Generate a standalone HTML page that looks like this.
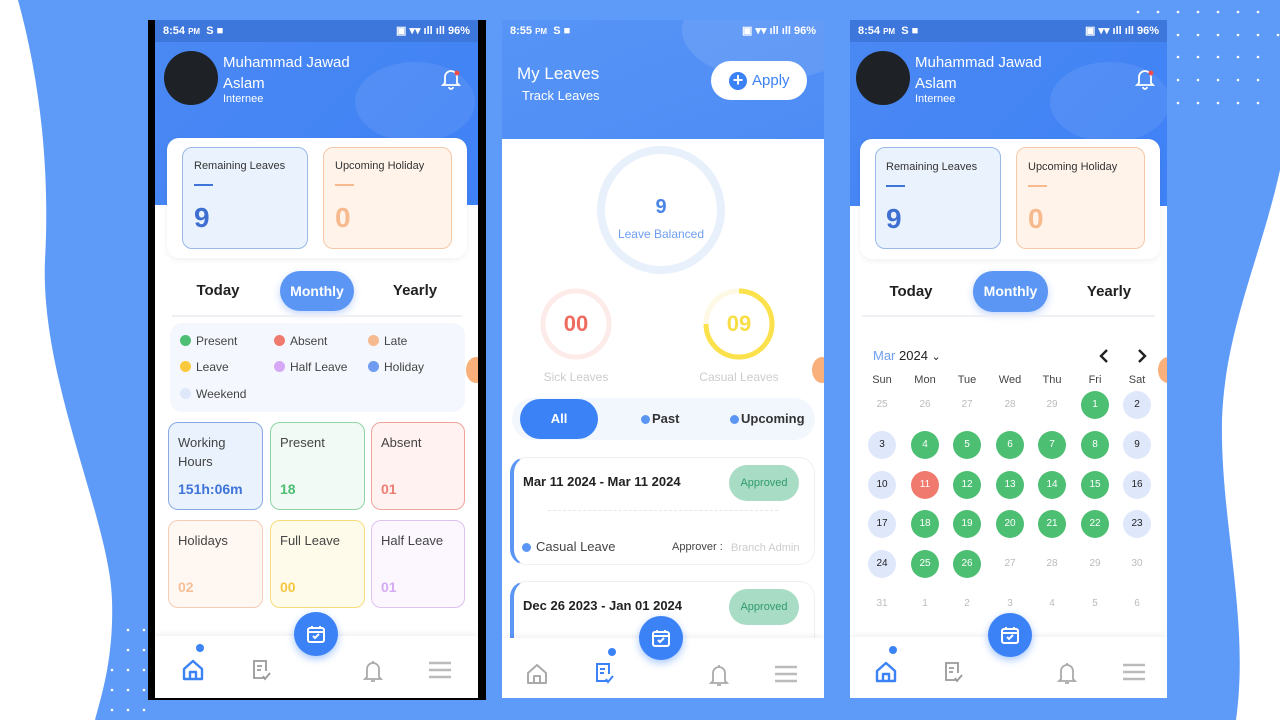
<!DOCTYPE html>
<html><head><meta charset="utf-8">
<style>
*{margin:0;padding:0;box-sizing:border-box}
body{width:1280px;height:720px;overflow:hidden;background:#5e9bf8;font-family:"Liberation Sans",sans-serif;position:relative}
.a{position:absolute}
.ph{position:absolute;top:20px;height:678px;background:#fff;overflow:hidden}
.sb{position:absolute;left:0;top:0;right:0;height:22px;background:#3d77dc;color:#fff;font-size:11px;font-weight:bold;line-height:22px;padding:0 8px}
.sb .r{position:absolute;right:8px;top:0}
.hd{position:absolute;left:0;top:22px;right:0;background:linear-gradient(135deg,#4a88f3,#3f82f6)}
.wh{color:#fff}
.box{position:absolute;border-radius:10px;border:1px solid}
.st{position:absolute;border-radius:10px;border:1.2px solid;font-size:13px;color:#444;padding:10px 9px;line-height:19px}
.st b{position:absolute;left:9px;bottom:10px;font-size:14px;font-weight:bold}
.dot{display:inline-block;width:11px;height:11px;border-radius:50%;vertical-align:-1px;margin-right:5px}
.lg{position:absolute;font-size:12px;color:#444}
.nav{position:absolute;left:0;right:0;bottom:0;height:62px;background:#fff;box-shadow:0 -2px 6px rgba(0,0,0,.06)}
.fab{position:absolute;width:44px;height:44px;border-radius:50%;background:#3b82f6;box-shadow:0 3px 8px rgba(59,130,246,.45)}
.ic{position:absolute}
.c{position:absolute;width:28px;height:28px;border-radius:50%;font-size:10px;text-align:center;line-height:28px;color:#bbb}
.g{background:#4cbf73;color:#fff}.w{background:#dfe7fb;color:#222}.rd{background:#f07a6e;color:#fff}
.tab{position:absolute;font-size:15px;font-weight:bold;color:#222;transform:translateX(-50%)}
.pill{position:absolute;height:40px;border-radius:20px;background:#5b96f5;color:#fff;font-size:14px;font-weight:bold;text-align:center;line-height:40px;box-shadow:0 3px 8px rgba(60,120,240,.3)}
.big{font-size:28px!important;font-weight:bold}
</style></head><body>

<svg class="a" style="left:0;top:0" width="1280" height="720">
<path d="M0 0 L18 0 C40 80 50 170 45 260 C40 380 110 520 112 600 C114 660 100 700 95 720 L0 720 Z" fill="#fff"/>
<path d="M1280 170 C1260 260 1225 330 1222 420 C1220 520 1250 620 1236 720 L1280 720 Z" fill="#fff"/>
<g fill="#fff">
<circle cx="1138" cy="12" r="1.3"/><circle cx="1158" cy="12" r="1.3"/><circle cx="1178" cy="12" r="1.3"/><circle cx="1198" cy="12" r="1.3"/><circle cx="1218" cy="12" r="1.3"/><circle cx="1238" cy="12" r="1.3"/><circle cx="1258" cy="12" r="1.3"/>
<circle cx="1178" cy="35" r="1.3"/><circle cx="1198" cy="35" r="1.3"/><circle cx="1218" cy="35" r="1.3"/><circle cx="1238" cy="35" r="1.3"/><circle cx="1258" cy="35" r="1.3"/><circle cx="1278" cy="35" r="1.3"/>
<circle cx="1178" cy="57" r="1.3"/><circle cx="1198" cy="57" r="1.3"/><circle cx="1218" cy="57" r="1.3"/><circle cx="1238" cy="57" r="1.3"/><circle cx="1258" cy="57" r="1.3"/>
<circle cx="1178" cy="80" r="1.3"/><circle cx="1198" cy="80" r="1.3"/><circle cx="1218" cy="80" r="1.3"/><circle cx="1238" cy="80" r="1.3"/><circle cx="1258" cy="80" r="1.3"/>
<circle cx="1178" cy="103" r="1.3"/><circle cx="1198" cy="103" r="1.3"/><circle cx="1218" cy="103" r="1.3"/><circle cx="1238" cy="103" r="1.3"/><circle cx="1258" cy="103" r="1.3"/>
<circle cx="128" cy="630" r="1.3"/><circle cx="144" cy="630" r="1.3"/><circle cx="128" cy="650" r="1.3"/><circle cx="144" cy="650" r="1.3"/><circle cx="112" cy="670" r="1.3"/><circle cx="128" cy="670" r="1.3"/><circle cx="144" cy="670" r="1.3"/><circle cx="112" cy="690" r="1.3"/><circle cx="128" cy="690" r="1.3"/><circle cx="144" cy="690" r="1.3"/><circle cx="112" cy="710" r="1.3"/><circle cx="128" cy="710" r="1.3"/><circle cx="144" cy="710" r="1.3"/>
</g>
</svg>

<!-- PHONE 1 -->
<div class="a" style="left:148px;top:20px;width:338px;height:680px;background:#000"></div>
<div class="ph" style="left:155px;width:323px">
 <div class="sb">8:54 <span style="font-size:8px">PM</span> &nbsp;S ■ <span class="r">▣ ▾▾ ıll ıll 96%</span></div>
 <div class="hd" style="height:163px"><div class="a" style="left:200px;top:20px;width:120px;height:80px;border-radius:50%;background:rgba(255,255,255,.08)"></div></div>
 <div class="a" style="left:9px;top:31px;width:54px;height:54px;border-radius:50%;background:#1e2226"></div>
 <div class="a wh" style="left:68px;top:32px;font-size:15px;line-height:21px">Muhammad Jawad<br>Aslam</div>
 <div class="a wh" style="left:68px;top:73px;font-size:11px">Internee</div>
 <svg class="ic" style="left:286px;top:48px" width="20" height="22" viewBox="0 0 20 22"><path d="M4 15 V9 a6 6 0 0 1 12 0 V15 L18 17 H2 Z M8 19 a2 2 0 0 0 4 0" fill="none" stroke="#fff" stroke-width="1.8"/><circle cx="16" cy="5" r="2.5" fill="#f04d4d"/></svg>
 <div class="a" style="left:12px;top:118px;width:300px;height:120px;background:#fff;border-radius:12px;box-shadow:0 2px 6px rgba(0,0,0,.06)"></div>
 <div class="box" style="left:27px;top:127px;width:126px;height:102px;background:#eaf2fe;border-color:#9ab8e8"></div>
 <div class="a" style="left:39px;top:140px;font-size:11px;color:#333">Remaining Leaves</div>
 <div class="a" style="left:39px;top:164px;width:19px;height:2px;background:#3f74d8"></div>
 <div class="a big" style="left:39px;top:182px;color:#3f6fd1">9</div>
 <div class="box" style="left:168px;top:127px;width:129px;height:102px;background:#fff3ea;border-color:#f5c9a8"></div>
 <div class="a" style="left:180px;top:140px;font-size:11px;color:#333">Upcoming Holiday</div>
 <div class="a" style="left:180px;top:164px;width:19px;height:2px;background:#f7b98e"></div>
 <div class="a big" style="left:180px;top:182px;color:#f7b98e">0</div>
 <div class="tab" style="left:63px;top:262px">Today</div>
 <div class="pill" style="left:125px;top:251px;width:74px">Monthly</div>
 <div class="tab" style="left:260px;top:262px">Yearly</div>
 <div class="a" style="left:17px;top:295px;width:290px;height:2px;background:#eef0f3"></div>
 <div class="a" style="left:15px;top:303px;width:295px;height:89px;background:#f4f7fd;border-radius:12px"></div>
 <div class="lg" style="left:25px;top:314px"><span class="dot" style="background:#4cbf73"></span>Present</div>
 <div class="lg" style="left:119px;top:314px"><span class="dot" style="background:#f07a6e"></span>Absent</div>
 <div class="lg" style="left:213px;top:314px"><span class="dot" style="background:#f7b98e"></span>Late</div>
 <div class="lg" style="left:25px;top:340px"><span class="dot" style="background:#fbc93d"></span>Leave</div>
 <div class="lg" style="left:119px;top:340px"><span class="dot" style="background:#d7a8f5"></span>Half Leave</div>
 <div class="lg" style="left:213px;top:340px"><span class="dot" style="background:#6f9cf0"></span>Holiday</div>
 <div class="lg" style="left:25px;top:367px"><span class="dot" style="background:#dfe7fb"></span>Weekend</div>
 <div class="a" style="left:311px;top:337px;width:20px;height:26px;border-radius:50%;background:#f9b07a"></div>
 <div class="st" style="left:13px;top:402px;width:95px;height:88px;background:#eaf2fe;border-color:#88a8e4">Working<br>Hours<b style="color:#3f74d8">151h:06m</b></div>
 <div class="st" style="left:115px;top:402px;width:95px;height:88px;background:#f1faf4;border-color:#8fd3a6">Present<b style="color:#4cbf73">18</b></div>
 <div class="st" style="left:216px;top:402px;width:94px;height:88px;background:#fff2f1;border-color:#eea39b">Absent<b style="color:#ee7d73">01</b></div>
 <div class="st" style="left:13px;top:500px;width:95px;height:88px;background:#fff7f2;border-color:#f4cdb5">Holidays<b style="color:#f5bf99">02</b></div>
 <div class="st" style="left:115px;top:500px;width:95px;height:88px;background:#fffbea;border-color:#f7dc7a">Full Leave<b style="color:#f5c842">00</b></div>
 <div class="st" style="left:216px;top:500px;width:94px;height:88px;background:#fcf6ff;border-color:#ddc2f2">Half Leave<b style="color:#d4abf3">01</b></div>
 <div class="nav" style="height:62px"></div>
 <div class="fab" style="left:139px;top:592px"></div>
 <svg class="ic" style="left:151px;top:604px" width="20" height="20" viewBox="0 0 20 20"><rect x="2" y="4" width="16" height="14" rx="2" fill="none" stroke="#fff" stroke-width="2"/><path d="M2 8 H18 M6 2 V5 M14 2 V5 M7 12 L9 14 L13 10" stroke="#fff" stroke-width="2" fill="none"/></svg>
 <div class="a" style="left:41px;top:624px;width:8px;height:8px;border-radius:50%;background:#3b82f6"></div>
 <svg class="ic" style="left:26px;top:638px" width="24" height="24" viewBox="0 0 24 24"><path d="M3 11 L12 3 L21 11 V21 H3 Z M9 21 V14 H15 V21" fill="none" stroke="#3b82f6" stroke-width="2.4" stroke-linejoin="round"/></svg>
 <svg class="ic" style="left:94px;top:638px" width="24" height="24" viewBox="0 0 24 24"><path d="M15 20 H5 V3 H17 V13 M8 8 H13 M8 12 H12 M14 18 L16 21 L21 15" fill="none" stroke="#999" stroke-width="1.8"/></svg>
 <svg class="ic" style="left:206px;top:638px" width="24" height="26" viewBox="0 0 24 26"><path d="M6 19 V11 a6 6 0 0 1 12 0 V19 L20 21 H4 Z M10 23 H14 M12 3 V5" fill="none" stroke="#aaa" stroke-width="1.8"/></svg>
 <svg class="ic" style="left:273px;top:640px" width="24" height="20" viewBox="0 0 24 20"><path d="M1 3 H23 M1 10 H23 M1 17 H23" stroke="#bbb" stroke-width="2.4"/></svg>
</div>

<!-- PHONE 2 -->
<div class="ph" style="left:502px;width:322px">
 <div class="hd" style="top:0;height:119px;background:linear-gradient(160deg,#5794f6,#4e8cf5)"><div class="a" style="left:180px;top:-40px;width:180px;height:100px;border-radius:50%;background:rgba(255,255,255,.1)"></div></div>
 <div class="sb" style="background:transparent">8:55 <span style="font-size:8px">PM</span> &nbsp;S ■ <span class="r">▣ ▾▾ ıll ıll 96%</span></div>
 <div class="a wh" style="left:15px;top:44px;font-size:17px">My Leaves</div>
 <div class="a wh" style="left:20px;top:68px;font-size:13px">Track Leaves</div>
 <div class="a" style="left:209px;top:41px;width:96px;height:39px;border-radius:20px;background:#fff"></div>
 <div class="a" style="left:227px;top:52px;width:18px;height:18px;border-radius:50%;background:#3b82f6;color:#fff;font-size:18px;line-height:17px;text-align:center;font-weight:bold">+</div>
 <div class="a" style="left:250px;top:52px;font-size:15px;color:#3b82f6">Apply</div>
 <svg class="a" style="left:0;top:119px" width="322" height="270">
  <circle cx="159" cy="71" r="60" fill="none" stroke="#e8f0fc" stroke-width="8"/>
  <circle cx="74" cy="185" r="33" fill="none" stroke="#fdebe9" stroke-width="5"/>
  <circle cx="237" cy="185" r="33" fill="none" stroke="#fdf9e4" stroke-width="5"/>
  <path d="M237 152 A33 33 0 1 1 204 185" fill="none" stroke="#fbe14c" stroke-width="5"/>
 </svg>
 <div class="a" style="left:0;width:322px;top:176px;text-align:center;font-size:20px;font-weight:bold;color:#4a86e8;padding-right:4px">9</div>
 <div class="a" style="left:0;width:322px;top:207px;text-align:center;font-size:12px;color:#6e9ef0;padding-right:4px">Leave Balanced</div>
 <div class="a" style="left:41px;width:66px;top:291px;text-align:center;font-size:22px;font-weight:bold;color:#ee6b5f">00</div>
 <div class="a" style="left:24px;width:100px;top:350px;text-align:center;font-size:12px;color:#ccc">Sick Leaves</div>
 <div class="a" style="left:204px;width:66px;top:291px;text-align:center;font-size:22px;font-weight:bold;color:#f8de46">09</div>
 <div class="a" style="left:182px;width:110px;top:350px;text-align:center;font-size:12px;color:#ccc">Casual Leaves</div>
 <div class="a" style="left:310px;top:337px;width:20px;height:26px;border-radius:50%;background:#f9b07a"></div>
 <div class="a" style="left:10px;top:378px;width:303px;height:42px;border-radius:21px;background:#f2f6fd"></div>
 <div class="a" style="left:18px;top:379px;width:78px;height:40px;border-radius:20px;background:#3b82f6;color:#fff;font-size:13px;font-weight:bold;text-align:center;line-height:40px">All</div>
 <div class="lg" style="left:139px;top:391px;font-size:13px;font-weight:bold;color:#333"><span class="dot" style="background:#5b96f5;width:9px;height:9px;margin-right:2px"></span>Past</div>
 <div class="lg" style="left:228px;top:391px;font-size:13px;font-weight:bold;color:#333"><span class="dot" style="background:#5b96f5;width:9px;height:9px;margin-right:2px"></span>Upcoming</div>
 <div class="a" style="left:8px;top:437px;width:305px;height:108px;border-radius:16px;border:1px solid #eef0f3;border-left:4px solid #5b96f5;background:#fff"></div>
 <div class="a" style="left:21px;top:454px;font-size:13px;font-weight:bold;color:#222">Mar 11 2024 - Mar 11 2024</div>
 <div class="a" style="left:227px;top:445px;width:70px;height:36px;border-radius:18px;background:#a9dcc5;color:#2f9a6a;font-size:11px;text-align:center;line-height:36px">Approved</div>
 <div class="a" style="left:46px;top:490px;width:230px;border-top:1px dashed #e6e6e6"></div>
 <div class="lg" style="left:20px;top:519px;font-size:13px;color:#444"><span class="dot" style="background:#5b96f5;width:9px;height:9px"></span>Casual Leave</div>
 <div class="a" style="left:170px;top:521px;font-size:11px;color:#444">Approver :</div>
 <div class="a" style="left:229px;top:522px;font-size:11px;color:#ccc">Branch Admin</div>
 <div class="a" style="left:8px;top:561px;width:305px;height:108px;border-radius:16px;border:1px solid #eef0f3;border-left:4px solid #5b96f5;background:#fff"></div>
 <div class="a" style="left:21px;top:578px;font-size:13px;font-weight:bold;color:#222">Dec 26 2023 - Jan 01 2024</div>
 <div class="a" style="left:227px;top:569px;width:70px;height:36px;border-radius:18px;background:#a9dcc5;color:#2f9a6a;font-size:11px;text-align:center;line-height:36px">Approved</div>
 <div class="nav" style="height:60px"></div>
 <div class="fab" style="left:137px;top:596px"></div>
 <svg class="ic" style="left:149px;top:608px" width="20" height="20" viewBox="0 0 20 20"><rect x="2" y="4" width="16" height="14" rx="2" fill="none" stroke="#fff" stroke-width="2"/><path d="M2 8 H18 M6 2 V5 M14 2 V5 M7 12 L9 14 L13 10" stroke="#fff" stroke-width="2" fill="none"/></svg>
 <div class="a" style="left:106px;top:628px;width:8px;height:8px;border-radius:50%;background:#3b82f6"></div>
 <svg class="ic" style="left:23px;top:642px" width="24" height="24" viewBox="0 0 24 24"><path d="M3 11 L12 3 L21 11 V21 H3 Z M9 21 V14 H15 V21" fill="none" stroke="#aaa" stroke-width="2" stroke-linejoin="round"/></svg>
 <svg class="ic" style="left:90px;top:641px" width="24" height="24" viewBox="0 0 24 24"><path d="M15 20 H5 V3 H17 V13 M8 8 H13 M8 12 H12 M14 18 L16 21 L21 15" fill="none" stroke="#3b82f6" stroke-width="2"/></svg>
 <svg class="ic" style="left:205px;top:642px" width="24" height="26" viewBox="0 0 24 26"><path d="M6 19 V11 a6 6 0 0 1 12 0 V19 L20 21 H4 Z M10 23 H14 M12 3 V5" fill="none" stroke="#aaa" stroke-width="1.8"/></svg>
 <svg class="ic" style="left:272px;top:644px" width="24" height="20" viewBox="0 0 24 20"><path d="M1 3 H23 M1 10 H23 M1 17 H23" stroke="#bbb" stroke-width="2.4"/></svg>
</div>

<!-- PHONE 3 -->
<div class="ph" style="left:850px;width:317px">
 <div class="sb">8:54 <span style="font-size:8px">PM</span> &nbsp;S ■ <span class="r">▣ ▾▾ ıll ıll 96%</span></div>
 <div class="hd" style="height:164px"><div class="a" style="left:200px;top:20px;width:120px;height:80px;border-radius:50%;background:rgba(255,255,255,.08)"></div></div>
 <div class="a" style="left:6px;top:31px;width:54px;height:54px;border-radius:50%;background:#1e2226"></div>
 <div class="a wh" style="left:65px;top:32px;font-size:15px;line-height:21px">Muhammad Jawad<br>Aslam</div>
 <div class="a wh" style="left:65px;top:73px;font-size:11px">Internee</div>
 <svg class="ic" style="left:285px;top:48px" width="20" height="22" viewBox="0 0 20 22"><path d="M4 15 V9 a6 6 0 0 1 12 0 V15 L18 17 H2 Z M8 19 a2 2 0 0 0 4 0" fill="none" stroke="#fff" stroke-width="1.8"/><circle cx="16" cy="5" r="2.5" fill="#f04d4d"/></svg>
 <div class="a" style="left:10px;top:119px;width:300px;height:120px;background:#fff;border-radius:12px;box-shadow:0 2px 6px rgba(0,0,0,.06)"></div>
 <div class="box" style="left:25px;top:127px;width:126px;height:102px;background:#eaf2fe;border-color:#9ab8e8"></div>
 <div class="a" style="left:36px;top:141px;font-size:11px;color:#333">Remaining Leaves</div>
 <div class="a" style="left:36px;top:165px;width:19px;height:2px;background:#3f74d8"></div>
 <div class="a big" style="left:36px;top:183px;color:#3f6fd1">9</div>
 <div class="box" style="left:166px;top:127px;width:129px;height:102px;background:#fff3ea;border-color:#f5c9a8"></div>
 <div class="a" style="left:178px;top:141px;font-size:11px;color:#333">Upcoming Holiday</div>
 <div class="a" style="left:178px;top:165px;width:19px;height:2px;background:#f7b98e"></div>
 <div class="a big" style="left:178px;top:183px;color:#f7b98e">0</div>
 <div class="tab" style="left:61px;top:263px">Today</div>
 <div class="pill" style="left:123px;top:251px;width:75px;height:41px">Monthly</div>
 <div class="tab" style="left:259px;top:263px">Yearly</div>
 <div class="a" style="left:12px;top:295px;width:293px;height:2px;background:#eef0f3"></div>
 <div class="a" style="left:23px;top:328px;font-size:13px;color:#6e9ef0">Mar <span style="color:#222">2024</span> <span style="color:#222;font-size:11px">&#8964;</span></div>
 <svg class="ic" style="left:248px;top:328px" width="50" height="16" viewBox="0 0 50 16"><path d="M9 2 L3 8 L9 14 M41 2 L47 8 L41 14" fill="none" stroke="#222" stroke-width="2.4"/></svg>
 <div class="a" style="left:18px;top:354px;width:290px;font-size:11px;color:#444">
  <span class="a" style="left:14px;transform:translateX(-50%)">Sun</span><span class="a" style="left:57px;transform:translateX(-50%)">Mon</span><span class="a" style="left:99px;transform:translateX(-50%)">Tue</span><span class="a" style="left:142px;transform:translateX(-50%)">Wed</span><span class="a" style="left:184px;transform:translateX(-50%)">Thu</span><span class="a" style="left:227px;transform:translateX(-50%)">Fri</span><span class="a" style="left:269px;transform:translateX(-50%)">Sat</span>
 </div>
 <div class="c" style="left:18px;top:371px">25</div><div class="c" style="left:61px;top:371px">26</div><div class="c" style="left:103px;top:371px">27</div><div class="c" style="left:146px;top:371px">28</div><div class="c" style="left:188px;top:371px">29</div><div class="c g" style="left:231px;top:371px">1</div><div class="c w" style="left:273px;top:371px">2</div>
 <div class="c w" style="left:18px;top:411px">3</div><div class="c g" style="left:61px;top:411px">4</div><div class="c g" style="left:103px;top:411px">5</div><div class="c g" style="left:146px;top:411px">6</div><div class="c g" style="left:188px;top:411px">7</div><div class="c g" style="left:231px;top:411px">8</div><div class="c w" style="left:273px;top:411px">9</div>
 <div class="c w" style="left:18px;top:451px">10</div><div class="c rd" style="left:61px;top:451px">11</div><div class="c g" style="left:103px;top:451px">12</div><div class="c g" style="left:146px;top:451px">13</div><div class="c g" style="left:188px;top:451px">14</div><div class="c g" style="left:231px;top:451px">15</div><div class="c w" style="left:273px;top:451px">16</div>
 <div class="c w" style="left:18px;top:490px">17</div><div class="c g" style="left:61px;top:490px">18</div><div class="c g" style="left:103px;top:490px">19</div><div class="c g" style="left:146px;top:490px">20</div><div class="c g" style="left:188px;top:490px">21</div><div class="c g" style="left:231px;top:490px">22</div><div class="c w" style="left:273px;top:490px">23</div>
 <div class="c w" style="left:18px;top:530px">24</div><div class="c g" style="left:61px;top:530px">25</div><div class="c g" style="left:103px;top:530px">26</div><div class="c" style="left:146px;top:530px">27</div><div class="c" style="left:188px;top:530px">28</div><div class="c" style="left:231px;top:530px">29</div><div class="c" style="left:273px;top:530px">30</div>
 <div class="c" style="left:18px;top:570px">31</div><div class="c" style="left:61px;top:570px">1</div><div class="c" style="left:103px;top:570px">2</div><div class="c" style="left:146px;top:570px">3</div><div class="c" style="left:188px;top:570px">4</div><div class="c" style="left:231px;top:570px">5</div><div class="c" style="left:273px;top:570px">6</div>
 <div class="a" style="left:308px;top:337px;width:20px;height:26px;border-radius:50%;background:#f9b07a"></div>
 <div class="nav" style="height:61px"></div>
 <div class="fab" style="left:138px;top:593px"></div>
 <svg class="ic" style="left:150px;top:605px" width="20" height="20" viewBox="0 0 20 20"><rect x="2" y="4" width="16" height="14" rx="2" fill="none" stroke="#fff" stroke-width="2"/><path d="M2 8 H18 M6 2 V5 M14 2 V5 M7 12 L9 14 L13 10" stroke="#fff" stroke-width="2" fill="none"/></svg>
 <div class="a" style="left:39px;top:626px;width:8px;height:8px;border-radius:50%;background:#3b82f6"></div>
 <svg class="ic" style="left:24px;top:640px" width="24" height="24" viewBox="0 0 24 24"><path d="M3 11 L12 3 L21 11 V21 H3 Z M9 21 V14 H15 V21" fill="none" stroke="#3b82f6" stroke-width="2.4" stroke-linejoin="round"/></svg>
 <svg class="ic" style="left:91px;top:640px" width="24" height="24" viewBox="0 0 24 24"><path d="M15 20 H5 V3 H17 V13 M8 8 H13 M8 12 H12 M14 18 L16 21 L21 15" fill="none" stroke="#999" stroke-width="1.8"/></svg>
 <svg class="ic" style="left:205px;top:640px" width="24" height="26" viewBox="0 0 24 26"><path d="M6 19 V11 a6 6 0 0 1 12 0 V19 L20 21 H4 Z M10 23 H14 M12 3 V5" fill="none" stroke="#aaa" stroke-width="1.8"/></svg>
 <svg class="ic" style="left:272px;top:642px" width="24" height="20" viewBox="0 0 24 20"><path d="M1 3 H23 M1 10 H23 M1 17 H23" stroke="#bbb" stroke-width="2.4"/></svg>
</div>
</body></html>
